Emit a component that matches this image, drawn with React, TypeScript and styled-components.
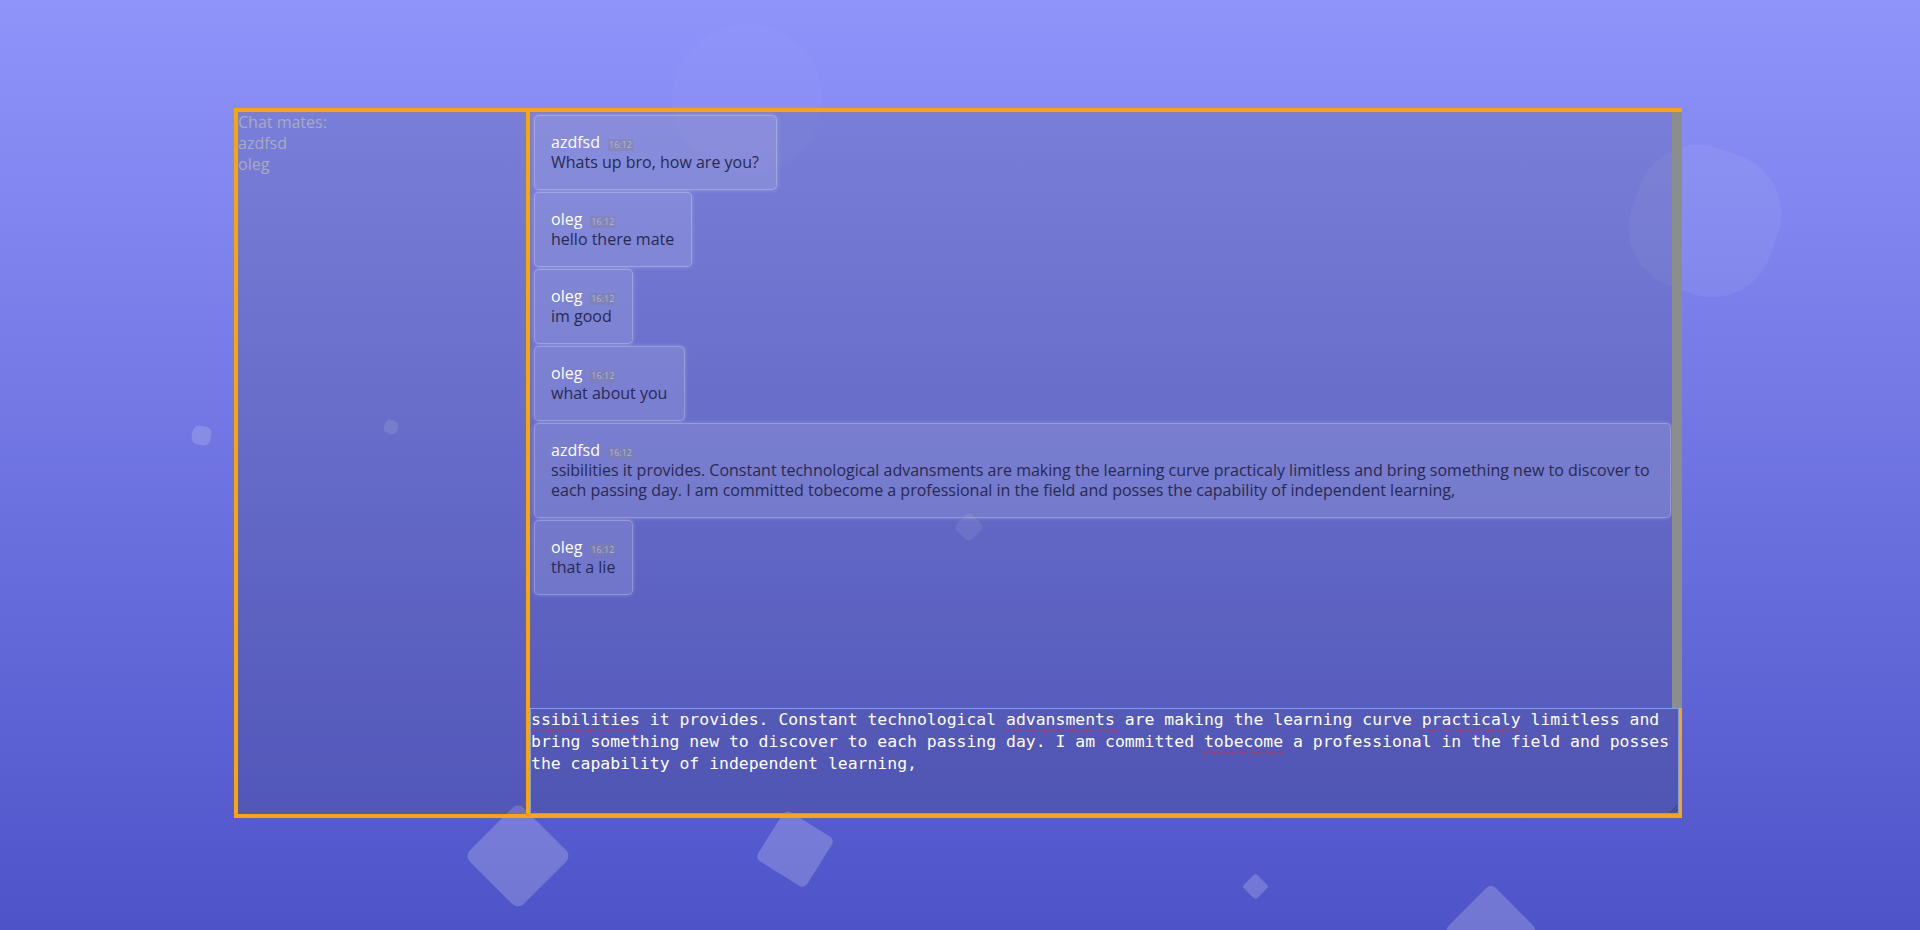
import React from "react";
import styled, { createGlobalStyle } from "styled-components";

const GlobalStyle = createGlobalStyle`
  html, body { margin: 0; padding: 0; }
  body {
    font-family: "Open Sans", "Noto Sans", sans-serif;
    overflow: hidden;
  }
`;

const Area = styled.div`
  position: relative;
  width: 100%;
  height: 930px;
  overflow: hidden;
  box-sizing: border-box;
  padding-top: 108px;
  background: linear-gradient(to bottom, #8f94fb, #4e54c8);
`;

const Shape = styled.span<{ $size: number; $radius: string; $alpha: number }>`
  position: absolute;
  display: block;
  width: ${(p) => p.$size}px;
  height: ${(p) => p.$size}px;
  border-radius: ${(p) => p.$radius};
  background: rgba(255, 255, 255, ${(p) => p.$alpha});
`;

const Frame = styled.div`
  position: relative;
  z-index: 1;
  display: flex;
  width: 1448px;
  height: 710px;
  margin-left: 234px;
  box-sizing: border-box;
  border: 4px solid orange;
  border-right: none;
  background: rgba(63, 68, 100, 0.2);
`;

const Sidebar = styled.aside`
  width: 292px;
  flex: none;
  box-sizing: border-box;
  border-right: 4px solid orange;
  color: #a9aac0;
  font-size: 16px;
  line-height: 21px;
`;

const SidebarLine = styled.div`
  white-space: nowrap;
`;

const ChatColumn = styled.section`
  flex: 1;
  min-width: 0;
  display: flex;
  flex-direction: column;
`;

const MessageList = styled.div`
  flex: 1;
  min-height: 0;
  overflow-y: auto;
  box-sizing: border-box;
  padding: 3px 1px 0 4px;
  border-right: 10px solid #8a8e8d;
  display: flex;
  flex-direction: column;
  align-items: flex-start;
  gap: 2px;
  scrollbar-width: none;
`;

const Bubble = styled.div`
  max-width: 100%;
  box-sizing: border-box;
  padding: 16px 17px 17px 16px;
  border: 1px solid rgba(255, 255, 255, 0.22);
  border-radius: 5px;
  background: rgba(255, 255, 255, 0.12);
  box-shadow: 0 0 4px rgba(255, 255, 255, 0.25);
`;

const BubbleHead = styled.div`
  display: flex;
  align-items: baseline;
  line-height: 20px;
`;

const Author = styled.span`
  color: #ffffff;
  font-size: 16px;
  font-weight: 500;
`;

const Time = styled.span`
  margin-left: 8px;
  padding: 0 1px;
  font-size: 9px;
  line-height: 12px;
  color: #b4b4c8;
  background: rgba(128, 128, 140, 0.35);
`;

const BubbleText = styled.div`
  color: #272a52;
  font-size: 16px;
  line-height: 20px;
`;

const Composer = styled.div`
  position: relative;
  height: 106px;
  flex: none;
  border-right: 3px solid orange;
`;

const TextBox = styled.div`
  height: 100%;
  box-sizing: border-box;
  border: 1px solid #7b9ee8;
  padding: 0 1px 0 0;
  background: rgba(60, 64, 110, 0.08);
  color: #ffffff;
  font-family: "DejaVu Sans Mono", "Liberation Mono", monospace;
  font-size: 16.45px;
  line-height: 22px;
  outline: none;
  white-space: pre-wrap;
  word-wrap: break-word;
`;

const Misspelled = styled.span`
  text-decoration: underline wavy #e4262c;
  text-decoration-thickness: 1px;
  text-underline-offset: 3px;
`;

const Grip = styled.svg`
  position: absolute;
  right: 1px;
  bottom: 1px;
  width: 9px;
  height: 9px;
`;

const shapes = [
  { left: 480, top: 818, size: 76, rot: 45, radius: "8px", alpha: 0.2 },
  { left: 766, top: 820, size: 58, rot: 32, radius: "6px", alpha: 0.2 },
  { left: 1246, top: 877, size: 19, rot: 45, radius: "3px", alpha: 0.2 },
  { left: 1458, top: 897, size: 66, rot: 45, radius: "6px", alpha: 0.2 },
  { left: 1632, top: 148, size: 146, rot: 20, radius: "42%", alpha: 0.06 },
  { left: 672, top: 24, size: 150, rot: 0, radius: "50%", alpha: 0.025 },
  { left: 192, top: 426, size: 19, rot: 10, radius: "35%", alpha: 0.16 },
  { left: 384, top: 420, size: 14, rot: 20, radius: "40%", alpha: 0.14 },
  { left: 958, top: 516, size: 22, rot: 45, radius: "5px", alpha: 0.1 },
];

const messages = [
  { author: "azdfsd", time: "16:12", text: "Whats up bro, how are you?" },
  { author: "oleg", time: "16:12", text: "hello there mate" },
  { author: "oleg", time: "16:12", text: "im good" },
  { author: "oleg", time: "16:12", text: "what about you" },
  {
    author: "azdfsd",
    time: "16:12",
    text:
      "ssibilities it provides. Constant technological advansments are making the learning curve practicaly limitless and bring something new to discover to each passing day. I am committed tobecome a professional in the field and posses the capability of independent learning,",
  },
  { author: "oleg", time: "16:12", text: "that a lie" },
];

export default function App() {
  return (
    <>
      <GlobalStyle />
      <Area>
        {shapes.map((s, i) => (
          <Shape
            key={i}
            $size={s.size}
            $radius={s.radius}
            $alpha={s.alpha}
            style={{ left: s.left, top: s.top, transform: `rotate(${s.rot}deg)` }}
          />
        ))}
        <Frame>
          <Sidebar>
            <SidebarLine>Chat mates:</SidebarLine>
            <SidebarLine>azdfsd</SidebarLine>
            <SidebarLine>oleg</SidebarLine>
          </Sidebar>
          <ChatColumn>
            <MessageList>
              {messages.map((m, i) => (
                <Bubble key={i}>
                  <BubbleHead>
                    <Author>{m.author}</Author>
                    <Time>{m.time}</Time>
                  </BubbleHead>
                  <BubbleText>{m.text}</BubbleText>
                </Bubble>
              ))}
            </MessageList>
            <Composer>
              <TextBox role="textbox" aria-multiline="true" spellCheck={false}>
                <Misspelled>ssibilities</Misspelled> it provides. Constant technological{" "}
                <Misspelled>advansments</Misspelled> are making the learning curve{" "}
                <Misspelled>practicaly</Misspelled> limitless and bring something new to discover to
                each passing day. I am committed <Misspelled>tobecome</Misspelled> a professional in
                the field and posses the capability of independent learning,
              </TextBox>
              <Grip viewBox="0 0 9 9">
                <path d="M8.5 1.5 L1.5 8.5 M8.5 5 L5 8.5" stroke="#3a3a4a" strokeWidth="1" />
              </Grip>
            </Composer>
          </ChatColumn>
        </Frame>
      </Area>
    </>
  );
}
